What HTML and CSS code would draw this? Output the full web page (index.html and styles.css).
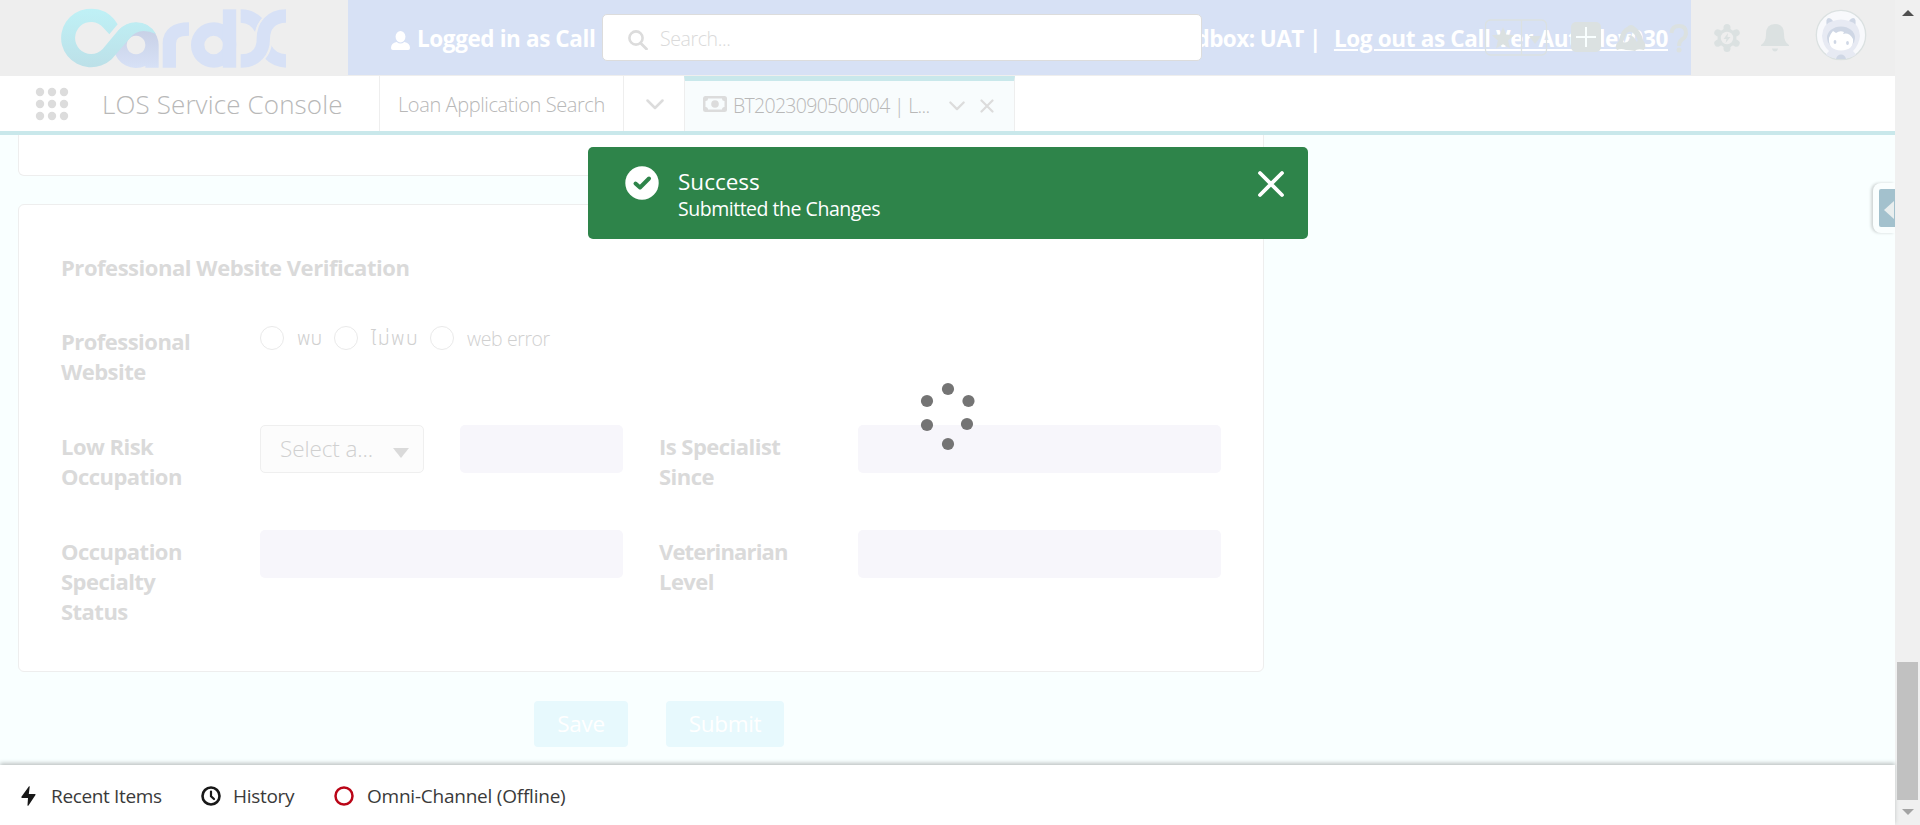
FILE: index.html
```html
<!DOCTYPE html>
<html lang="en">
<head>
<meta charset="utf-8">
<title>LOS Service Console</title>
<link rel="stylesheet" href="styles.css">
</head>
<body>
<div class="app">
  <div class="page">
    <header class="header">
      <div class="brand">
        <svg class="logo" viewBox="0 0 690 190">
          <defs>
            <linearGradient id="gc" x1="0" y1="0" x2="0" y2="1"><stop offset="0" stop-color="#bff1f6"/><stop offset="1" stop-color="#bce0e8"/></linearGradient>
            <linearGradient id="ga" x1="0" y1="0" x2="0" y2="1"><stop offset="0" stop-color="#c5cde3"/><stop offset="1" stop-color="#d7e1f6"/></linearGradient>
          </defs>
          <g transform="translate(-30 -20)" fill="none" stroke-width="40">
            <path fill-rule="evenodd" d="M258 67a68 68 0 0 1 68 67v68h-40v-5a68 68 0 1 1-28-130zM258 106a28 28 0 1 0 .1 0z" fill="url(#ga)"/>
            <path d="M203 72A90 88 0 1 0 185 177L238 115Q265 78 318 101Q298 66 258 66Q228 66 205 90L158 146A48 48 0 1 1 160 82L178 102Z" fill="url(#gc)"/>
            <g stroke="#d7e1f6">
              <path d="M358 202V130Q358 86 417 86"/>
              <circle cx="491" cy="134" r="48"/>
              <path d="M538.500 27V202"/>
              <path d="M572 182C618 182 640 152 640 115S662 47 708 47"/>
            </g>
            <path d="M572 27Q612 28 637 54Q620 72 616 96Q602 68 572 67ZM663 134Q678 161 708 162V202Q668 200 644 174Q659 158 663 134Z" fill="#d7e1f6"/>
            <path d="M638 54Q620 74 617 98M664 132Q659 158 643 176" stroke="#eee" stroke-width="4"/>
          </g>
        </svg>
      </div>
      <div class="banner">
        <div class="banner-left">
          <svg class="user" viewBox="0 0 20 20" fill="#fff"><ellipse cx="10" cy="6" rx="5.200" ry="6"/><path d="M0 18Q0 12.500 6 11.500Q10 15 14 11.500Q20 12.500 20 18Q20 20 18 20H2Q0 20 0 18Z"/></svg>
          <span class="b1">Logged in as Call</span>
        </div>
        <div class="banner-right"><span class="b2">Sandbox: UAT |</span><a class="b3">Log out as Call Ver Autodev030</a></div>
      </div>
      <div class="search">
        <svg class="mag" viewBox="0 0 20 20" fill="none" stroke="#dcdcdc"><circle cx="8" cy="8" r="6.600" stroke-width="2.600"/><path d="M12.500 13L18.500 19" stroke-width="2.800" stroke-linecap="round"/></svg>
        <span>Search...</span>
      </div>
      <svg class="tools" viewBox="0 0 400 76" fill="#dbe1e1">
        <g fill="none" stroke="#dbe1e1" stroke-width="1.300"><rect x="5.500" y="20" width="61" height="35" rx="5"/><path d="M41.500 20V55"/></g>
        <path d="M23 27l3.200 7.500 8 .7-6.100 5.300 1.900 8-7-4.200-7 4.200 1.900-8-6.100-5.300 8-.7zM49 36h12l-6 8z"/>
        <rect x="91" y="22" width="30" height="30" rx="5"/><path d="M106 27V47M96 37H116" stroke="#f9ffff" stroke-width="2"/>
        <path fill-rule="evenodd" d="M137 50Q134 45 139 41Q141 29 147 27Q151 23 155 27Q161 31 163 40Q167 45 164 50Q157 48 155 51Q150 50 146 50Q141 48 137 50ZM143 42Q147 44 151 38L148 36Q152 33 157 42Q159 40 154 34Q150 29 146 34Z"/>
        <path d="M191.500 33Q192 26 199 26Q206 26 206 33Q206 37 202 39.500Q199 41.500 199 46" fill="none" stroke="#dbe1e1" stroke-width="4"/><circle cx="199" cy="50" r="2.500"/>
        <g transform="translate(247 38)"><g stroke="#dbe1e1" stroke-width="7" stroke-linecap="round"><path d="M0-10.500V10.500M-9.200-5.200L9.200 5.200M9.200-5.200L-9.200 5.200"/></g><circle r="9.500"/><circle r="6.200" fill="#eee"/><path d="M1-5L-3.500 1H-.5L-1.500 5L3.500-1H.5Z"/></g>
        <path d="M281 45Q286 42 286 34Q286 24 295 24Q304 24 304 34Q304 42 309 45V46H281ZM292 48.500H298Q297.500 51.500 295 51.500Q292.500 51.500 292 48.500Z"/>
        <g transform="translate(361 35)">
          <circle r="24.700" fill="#f8f9fc" stroke="#dbe1e1" stroke-width="1.300"/>
          <path d="M-14-8Q-16-17-12-17Q-8-16-7-11ZM14-8Q16-17 12-17Q8-16 7-11Z" fill="#cfd7e5"/>
          <path d="M-19 1Q-18-12-8-14Q0-17 8-14Q18-12 19 1Q18 10 12 16Q15 19 15 20Q0 28-15 20Q-14 18-12 16Q-18 11-19 1Z" fill="#e7eaf3"/>
          <path d="M-14 3A14 11.500 0 0 1 14 3Q14 7 11 10H-11Q-14 7-14 3Z" fill="#cfd7e5"/><path d="M-12 3Q-10-2-8-4L-5-2Q-1-5 3-3L2-1Q8-3 12 4Q13 15 0 15.500Q-13 15-12 3Z" fill="#fff"/>
          <ellipse cx="-6" cy="7" rx="1.400" ry="2" fill="#cfd7e5"/><ellipse cx="6.500" cy="8" rx="1.400" ry="2" fill="#cfd7e5"/><path d="M-5 24Q-4 19.500 0 19.500Q4 19.500 5 24Z" fill="#cfd7e5"/>
        </g>
      </svg>
    </header>

    <nav class="nav">
      <div class="app-name">
        <svg class="waffle" viewBox="0 0 34 34" fill="#dcdcdc"><circle cx="5" cy="5" r="4.200"/><circle cx="17" cy="5" r="4.200"/><circle cx="29" cy="5" r="4.200"/><circle cx="5" cy="17" r="4.200"/><circle cx="17" cy="17" r="4.200"/><circle cx="29" cy="17" r="4.200"/><circle cx="5" cy="29" r="4.200"/><circle cx="17" cy="29" r="4.200"/><circle cx="29" cy="29" r="4.200"/></svg>
        <span class="console">LOS Service Console</span>
      </div>
      <div class="nav-item"><span class="loan">Loan Application Search</span></div>
      <div class="nav-more"><svg class="chev" viewBox="0 0 18 11"><path d="M1.500 1.500L9 9L16.500 1.500"/></svg></div>
      <div class="tab">
        <svg class="money" viewBox="0 0 24 16"><rect width="24" height="16" rx="2.500" fill="#dcdcdc"/><path d="M5 2.500H19Q19 5 21.500 5V11Q19 11 19 13.500H5Q5 11 2.500 11V5Q5 5 5 2.500Z" fill="#f8fcfd"/><ellipse cx="12" cy="8" rx="3.800" ry="3.800" fill="#dcdcdc"/></svg>
        <span class="bt">BT2023090500004 | L...</span>
        <svg class="chev small" viewBox="0 0 18 11"><path d="M1.500 1.500L9 9L16.500 1.500"/></svg>
        <svg class="tab-x" viewBox="0 0 14 14"><path d="M1.500 1.500L12.500 12.500M12.500 1.500L1.500 12.500"/></svg>
      </div>
    </nav>

    <main class="content">
      <section class="card card-prev"></section>
      <section class="card card-main">
        <h2 class="title"><span class="t1">Professional Website Verification</span></h2>
        <div class="row row-radio">
          <div class="label">Professional<br>Website</div>
          <div class="radios">
            <i class="radio"></i><span class="r1">พบ</span>
            <i class="radio"></i><span class="r2">ไม่พบ</span>
            <i class="radio"></i><span class="r3">web error</span>
          </div>
        </div>
        <div class="row">
          <div class="label">Low Risk<br>Occupation</div>
          <div class="pair">
            <div class="select"><span class="sel">Select a...</span><i class="caret"></i></div>
            <div class="field"></div>
          </div>
          <div class="label second">Is Specialist<br>Since</div>
          <div class="field"></div>
        </div>
        <div class="row">
          <div class="label">Occupation<br>Specialty<br>Status</div>
          <div class="field"></div>
          <div class="label second"><span class="vet">Veterinarian</span><br>Level</div>
          <div class="field"></div>
        </div>
      </section>
      <div class="actions"><div class="btn save"><span>Save</span></div><div class="btn submit"><span>Submit</span></div></div>
      <div class="side"><div class="side-in"><i></i></div></div>
    </main>

    <footer class="footer">
      <svg class="f-bolt" viewBox="0 0 15 20" fill="#181818"><path d="M8 .3Q8.800-.2 8.700.8L7.800 8H14Q15 8.300 14.300 9.300L7.500 19.500Q6.400 20.400 6.500 19L7 12H1Q0 11.600.6 10.600Z"/></svg>
      <span class="f1">Recent Items</span>
      <svg class="f-clock" viewBox="0 0 20 20" fill="none" stroke="#181818"><circle cx="10" cy="10" r="8.500" stroke-width="2.600"/><path d="M10 5.500V10.200L13 13" stroke-width="2.200" stroke-linecap="round"/></svg>
      <span class="f2">History</span>
      <svg class="f-omni" viewBox="0 0 20 20" fill="none" stroke="#ba0517"><circle cx="10" cy="10" r="8.500" stroke-width="2.500"/></svg>
      <span class="f3">Omni-Channel (Offline)</span>
    </footer>

    <div class="toast">
      <svg class="ok" viewBox="0 0 34 34"><circle cx="17" cy="17" r="16.700" fill="#fff"/><path d="M10.500 17.500L15 21.500L24 12.500" fill="none" stroke="#2e844a" stroke-width="4" stroke-linecap="round" stroke-linejoin="round"/></svg>
      <div class="toast-text"><div class="s1"><span>Success</span></div><div class="s2"><span>Submitted the Changes</span></div></div>
      <svg class="toast-x" viewBox="0 0 28 28"><path d="M3 3L25 25M25 3L3 25" stroke="#fff" stroke-width="3.800" stroke-linecap="round"/></svg>
    </div>
    <svg class="spinner" viewBox="0 0 60 72" fill="#747474"><circle cx="30" cy="8" r="6.100"/><circle cx="50.500" cy="20" r="6.100"/><circle cx="49" cy="43" r="6.100"/><circle cx="30" cy="63" r="6.100"/><circle cx="9" cy="44" r="6.100"/><circle cx="9" cy="20" r="6.100"/></svg>
  </div>
  <div class="scrollbar"><i class="up"></i><div class="thumb"></div><i class="down"></i></div>
</div>
</body>
</html>
```
FILE: styles.css
```css
* { box-sizing: border-box; }
body { margin: 0; font-family: "Open Sans", "Noto Sans", "Noto Sans Thai", sans-serif; color: #dadada; overflow: hidden; }
svg { display: block; flex: none; }
span, a { white-space: nowrap; }
.app { display: flex; width: 1920px; height: 825px; }
.page { position: relative; width: 1895px; display: flex; flex-direction: column; }

.header { position: relative; height: 76px; background: #eee; display: flex; border-bottom: 1px solid #eee; }
.brand { width: 348px; padding: 6.700px 0 0 60px; }
.logo { width: 230px; height: 63.330px; }
.banner { width: 1343px; height: 75px; background: #d7e1f5; color: #fff; font-size: 22.500px; font-weight: 700; display: flex; justify-content: space-between; align-items: center; padding: 2px 23px 0 43px; }
.banner-left, .banner-right { display: flex; align-items: center; }
.user { width: 19px; height: 19px; margin: 3px 7px 0 0; }
.banner-right { gap: 13px; }
.b1 { letter-spacing: -.4px; }
.b2 { letter-spacing: -.55px; }
.b3 { letter-spacing: -.35px; text-decoration: underline; text-decoration-thickness: 2px; text-underline-offset: 2px; }
.search { position: absolute; left: 602px; top: 14px; width: 600px; height: 47px; background: #fff; border: 1px solid #dcdcdc; border-radius: 5px; display: flex; align-items: center; padding: 0 0 0 25px; font-size: 19.500px; font-weight: 300; }
.search span { margin: 1px 0 0 12px; letter-spacing: -.4px; }
.mag { width: 20px; height: 20px; margin-top: 5px; }
.tools { position: absolute; left: 1480px; top: 0; width: 400px; height: 76px; }

.nav { height: 59px; background: #fff; border-bottom: 4px solid #c9e8eb; display: flex; color: #b8b8b8; }
.app-name { width: 380px; border-right: 1px solid #eee; display: flex; align-items: center; padding-left: 35px; }
.waffle { width: 34px; height: 34px; }
.console { font-size: 26px; font-weight: 300; margin-left: 33px; letter-spacing: .13px; }
.nav-item { width: 244px; border-right: 1px solid #eee; display: flex; align-items: center; padding: 2px 0 0 18px; font-size: 20px; font-weight: 300; letter-spacing: -.4px; }
.nav-more { width: 60px; display: flex; align-items: center; padding: 2px 0 0 22px; }
.chev { width: 18px; height: 11px; fill: none; stroke: #dcdcdc; stroke-width: 2.500; stroke-linecap: round; stroke-linejoin: round; }
.chev.small { width: 16px; height: 10px; margin-left: auto; margin-top: 4px; }
.tab { width: 331px; background: #f8fcfd; border: 1px solid #eee; border-top: 5px solid #c9e8eb; border-bottom: 0; display: flex; align-items: center; padding: 0 20px 4px 18px; font-size: 19.500px; font-weight: 300; letter-spacing: -.7px; }
.bt { margin-top: 2px; }
.money { width: 24px; height: 16px; margin-right: 6px; }
.tab-x { width: 14px; height: 14px; margin-left: 15px; margin-top: 3px; stroke: #dcdcdc; stroke-width: 2.200; stroke-linecap: round; }

.content { position: relative; height: 630px; background: #f9ffff; display: flex; flex-direction: column; padding-left: 18px; }
.card { width: 1246px; background: #fff; border: 1px solid #eee; border-radius: 6px; }
.card-prev { height: 41px; border-top: 0; border-radius: 0 0 6px 6px; }
.card-main { margin-top: 28px; height: 468px; padding: 46px 42px 0; }
.title { margin: 0; height: 69px; font-size: 22px; line-height: 32px; font-weight: 700; letter-spacing: -.46px; }
.row { height: 105px; display: flex; }
.label { width: 199px; font-size: 22px; line-height: 30px; font-weight: 700; padding-top: 6px; letter-spacing: -.53px; white-space: nowrap; }
.label.second { margin-left: 36px; }
.vet { letter-spacing: -.85px; }
.field { width: 363px; height: 48px; background: #f7f6fb; border-radius: 5px; }
.pair { display: flex; width: 363px; justify-content: space-between; }
.pair .field { width: 163px; }
.select { width: 164px; height: 48px; border: 1px solid #efefef; background: #fcfcfc; border-radius: 5px; display: flex; align-items: center; justify-content: space-between; padding: 0 14px 2px 19px; font-size: 22.500px; font-weight: 300; letter-spacing: -.1px; color: #d0d0d0; }
.caret { border: 8px solid transparent; border-top: 10px solid #dadada; border-bottom: 0; margin-top: 9px; }
.radios { display: flex; height: 36px; align-items: center; font-size: 19.500px; font-weight: 300; color: #d0d0d0; }
.radio { width: 24px; height: 24px; border: 1px solid #eaeaea; border-radius: 50%; margin-top: -1px; }
.radios span { margin: 1px 0 0 13px; }
.r1 { width: 37px; }
.r2 { width: 59px; letter-spacing: 1.400px; }
.r3 { letter-spacing: -.4px; }
.actions { display: flex; margin: 29px 0 0 516px; gap: 38px; font-size: 22.500px; color: #fff; }
.btn { height: 46px; background: #e7f9fd; border-radius: 4px; display: flex; align-items: center; justify-content: center; padding-bottom: 2px; }
.btn span { letter-spacing: -.3px; }
.save { width: 94px; }
.submit { width: 118px; }
.side { position: absolute; right: 0; top: 48px; width: 22px; height: 50px; background: #fafefe; border-radius: 8px 0 0 8px; box-shadow: -2px 0 3px #cfd5d5; padding: 6px 0 0 6px; }
.side-in { height: 38px; background: #a3c1cd; border-radius: 2px 0 0 2px; display: flex; align-items: center; justify-content: flex-end; padding: 3px 1px 0 0; }
.side-in i { border: 9px solid transparent; border-right: 10px solid #e9eeee; border-left: 0; }

.footer { position: relative; height: 60px; background: #fff; box-shadow: 0 -2px 4px #bfc5c5; display: flex; align-items: center; padding: 2px 0 0 21px; font-size: 19px; color: #3a3a3a; }
.f-bolt { width: 15px; height: 20px; margin-right: 15px; }
.f-clock, .f-omni { width: 20px; height: 20px; }
.f1 { width: 150px; letter-spacing: -.35px; }
.f2 { width: 101px; margin-left: 12px; letter-spacing: -.3px; }
.f3 { margin-left: 13px; letter-spacing: -.23px; }

.toast { position: absolute; left: 588px; top: 147px; width: 720px; height: 92px; background: #2e844a; border-radius: 5px; color: #fff; display: flex; padding: 19px 23px 0 37px; }
.ok { width: 34px; height: 34px; }
.toast-text { flex: 1; padding: 1px 0 0 19px; }
.s1 { font-size: 22.500px; line-height: 30px; }
.s2 { font-size: 19.500px; line-height: 24px; letter-spacing: -.48px; }
.toast-x { width: 28px; height: 28px; margin-top: 4px; }
.spinner { position: absolute; left: 918px; top: 381px; width: 60px; height: 72px; }

.scrollbar { width: 25px; background: #f0f0f0; display: flex; flex-direction: column; align-items: center; }
.up { margin-top: 10px; border: 6px solid transparent; border-bottom: 6px solid #505050; border-top: 0; }
.thumb { width: 21px; height: 138px; background: #c1c1c1; margin-top: 646px; }
.down { margin-top: 9px; border: 6px solid transparent; border-top: 6px solid #a3a3a3; border-bottom: 0; }
```
